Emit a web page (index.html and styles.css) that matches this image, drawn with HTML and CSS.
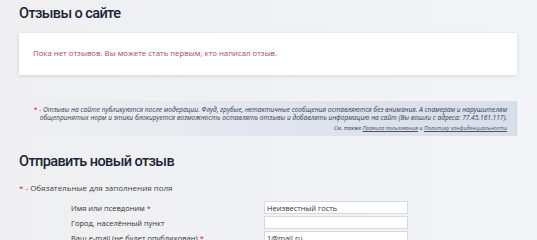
FILE: index.html
```html
<!DOCTYPE html>
<html lang="ru">
<head>
<meta charset="utf-8">
<title>Отзывы о сайте</title>
<link rel="stylesheet" href="styles.css">
</head>
<body>
<div class="page">
  <h1 class="title">Отзывы о сайте</h1>
  <div class="card">
    <p class="empty">Пока нет отзывов. Вы можете стать первым, кто написал отзыв.</p>
  </div>
  <div class="note">
    <p class="note-text"><span class="req">*</span> - Отзывы на сайте публикуются после модерации. Флуд, грубые, нетактичные сообщения оставляются без внимания. А спамерам и нарушителям<br>общепринятых норм и этики блокируется возможность оставлять отзывы и добавлять информацию на сайт (Вы вошли с адреса: 77.45.161.117).</p>
    <p class="note-links">См. также <a href="#">Правила пользования</a> и <a href="#">Политику конфиденциальности</a></p>
  </div>
  <h2 class="title title-2">Отправить новый отзыв</h2>
  <p class="required"><span class="req">*</span> - Обязательные для заполнения поля</p>
  <form class="form">
    <div class="row">
      <label class="label">Имя или псевдоним <span class="req">*</span></label>
      <input class="input" type="text" value="Неизвестный гость">
    </div>
    <div class="row">
      <label class="label">Город, населённый пункт</label>
      <input class="input" type="text" value="">
    </div>
    <div class="row">
      <label class="label">Ваш e-mail (не будет опубликован) <span class="req">*</span></label>
      <input class="input" type="text" value="1@mail.ru">
    </div>
  </form>
</div>
</body>
</html>
```
FILE: styles.css
```css
html, body {
  margin: 0;
  padding: 0;
}
body {
  background: linear-gradient(90deg, #efeff1 0%, #f0f2f5 60%, #f2f4f8 100%);
  font-family: "Open Sans", "DejaVu Sans", sans-serif;
  color: #333;
  height: 240px;
  overflow: hidden;
}
.page {
  padding: 0 20px 0 19px;
}
.title {
  margin: 0;
  padding-top: 2px;
  font-family: Roboto, "Open Sans", sans-serif;
  font-size: 14.5px;
  line-height: 24px;
  font-weight: 500;
  letter-spacing: -0.6px;
  color: #1b2435;
}
.card {
  margin-top: 7px;
  height: 42px;
  background: #fff;
  box-shadow: 0 1px 4px rgba(0, 0, 0, 0.12);
  display: flex;
  align-items: center;
  padding-left: 14px;
}
.empty {
  margin: 0 0 2px;
  font-size: 7.8px;
  color: #b14559;
}
.note {
  margin-top: 26px;
  height: 35px;
  background: linear-gradient(90deg, rgba(221, 226, 236, 0) 0%, #dfe3ec 60%, #d9dfea 100%);
  border-right: 1px solid #d0d6e2;
  padding: 5px 9px 0 10px;
  box-sizing: border-box;
  text-align: right;
  font-style: italic;
  color: #2f3a52;
  white-space: nowrap;
}
.note-text {
  margin: 0;
  font-size: 6.6px;
  line-height: 8px;
}
.note-links {
  margin: 2px 0 0;
  font-size: 5.4px;
  line-height: 8px;
}
.note-links a {
  color: #4a5262;
}
.req {
  color: #d0163c;
  font-style: normal;
}
.title-2 {
  margin-top: 12px;
}
.required {
  margin: 8px 0 0;
  font-size: 8px;
  color: #444;
}
.form {
  margin-top: 8px;
  display: flex;
  flex-direction: column;
  gap: 2px;
}
.row {
  display: flex;
  align-items: center;
}
.label {
  width: 245px;
  padding-left: 52px;
  font-size: 7.5px;
  color: #333;
  box-sizing: border-box;
}
.input {
  width: 144px;
  height: 13px;
  box-sizing: border-box;
  border: 1px solid #d6d9de;
  background: #fff;
  font-family: "Open Sans", "DejaVu Sans", sans-serif;
  font-size: 7.5px;
  padding: 0 2px;
  color: #333;
  margin: 0;
}
```
